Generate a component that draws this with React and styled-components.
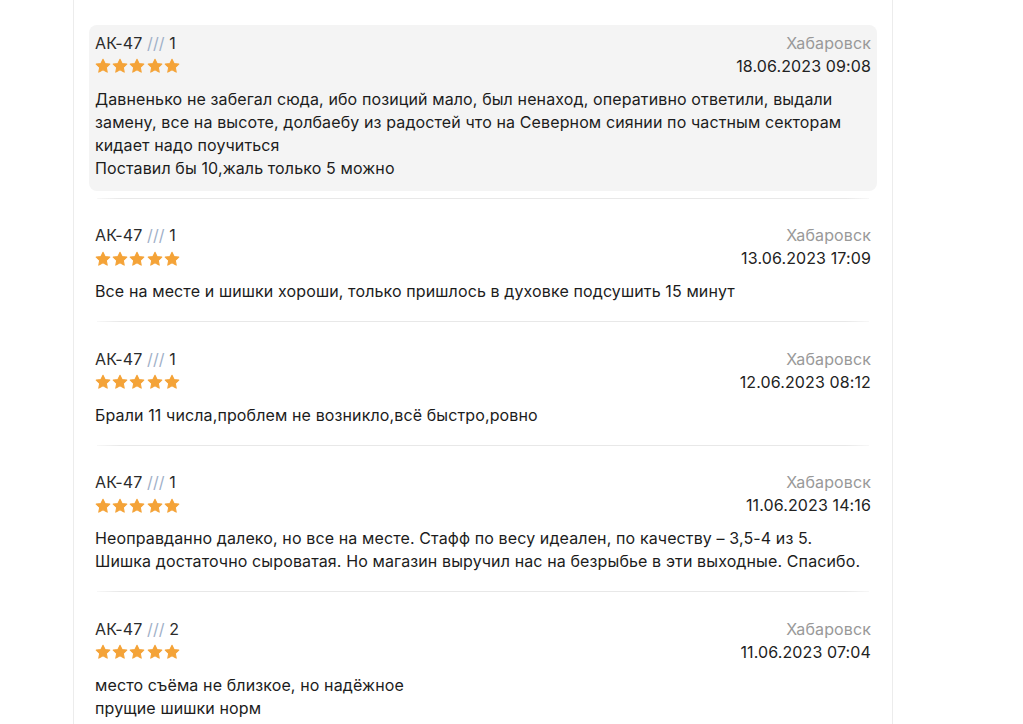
import React from 'react';
import styled, { createGlobalStyle } from 'styled-components';

const GlobalStyle = createGlobalStyle`
  html, body {
    margin: 0;
    padding: 0;
    background: #fff;
  }
  body {
    font-family: Inter, "Noto Sans", sans-serif;
    color: #1f1f1f;
  }
`;

const Page = styled.div`
  display: flex;
  padding-left: 73px;
  width: 1023px;
  box-sizing: border-box;
  min-height: 724px;
`;

const Column = styled.main`
  width: 820px;
  box-sizing: border-box;
  min-height: 724px;
  border-left: 1px solid #ececec;
  border-right: 1px solid #ececec;
  padding: 25px 15px 0 15px;
`;

const Review = styled.article`
  padding: 6.5px 6px 11px;
  border-radius: 8px;
  background: ${(p) => (p.highlighted ? '#f4f4f4' : 'transparent')};
`;

const Divider = styled.div`
  height: 1px;
  margin: 7px 8px 19px;
  background: linear-gradient(90deg, rgba(230,230,230,0.3), #e8e8e8 3%, #e8e8e8 97%, rgba(230,230,230,0.3));
`;

const Head = styled.header`
  display: flex;
  justify-content: space-between;
  font-size: 16px;
  line-height: 23px;
  letter-spacing: 0.12px;
`;

const Side = styled.div`
  display: flex;
  flex-direction: column;
  align-items: ${(p) => (p.right ? 'flex-end' : 'flex-start')};
`;

const Author = styled.div`
  color: #2b2b2b;
`;

const Slashes = styled.span`
  color: #9fb0c8;
`;

const Stars = styled.div`
  display: flex;
  gap: 1.2px;
  height: 23px;
  align-items: center;
`;

const Location = styled.div`
  color: #999;
`;

const DateText = styled.div`
  color: #222;
`;

const Body = styled.p`
  margin: 10px 0 0;
  font-size: 16px;
  line-height: 23px;
  letter-spacing: 0.12px;
  color: #1c1c1c;
  white-space: pre-line;
`;

const Star = () => (
  <svg width="16" height="16" viewBox="0 0 24 24">
    <path
      d="M12 1.8l3.1 6.5 7.1.9-5.2 4.9 1.3 7.1L12 17.8l-6.3 3.4 1.3-7.1L1.8 9.2l7.1-.9z"
      fill="#f4a338"
      stroke="#f4a338"
      strokeWidth="1.6"
      strokeLinejoin="round"
    />
  </svg>
);

const reviews = [
  {
    n: 1,
    date: '18.06.2023 09:08',
    text: 'Давненько не забегал сюда, ибо позиций мало, был ненаход, оперативно ответили, выдали замену, все на высоте, долбаебу из радостей что на Северном сиянии по частным секторам кидает надо поучиться\nПоставил бы 10,жаль только 5 можно',
    highlighted: true,
  },
  {
    n: 1,
    date: '13.06.2023 17:09',
    text: 'Все на месте и шишки хороши, только пришлось в духовке подсушить 15 минут',
  },
  {
    n: 1,
    date: '12.06.2023 08:12',
    text: 'Брали 11 числа,проблем не возникло,всё быстро,ровно',
  },
  {
    n: 1,
    date: '11.06.2023 14:16',
    text: 'Неоправданно далеко, но все на месте. Стафф по весу идеален, по качеству – 3,5-4 из 5. Шишка достаточно сыроватая. Но магазин выручил нас на безрыбье в эти выходные. Спасибо.',
  },
  {
    n: 2,
    date: '11.06.2023 07:04',
    text: 'место съёма не близкое, но надёжное\nпрущие шишки норм',
  },
];

export default function App() {
  return (
    <>
      <GlobalStyle />
      <Page>
        <Column>
          {reviews.map((r, i) => (
            <React.Fragment key={i}>
              {i > 0 && <Divider />}
              <Review highlighted={r.highlighted}>
                <Head>
                  <Side>
                    <Author>
                      АК-47 <Slashes>///</Slashes> {r.n}
                    </Author>
                    <Stars>
                      {[0, 1, 2, 3, 4].map((s) => (
                        <Star key={s} />
                      ))}
                    </Stars>
                  </Side>
                  <Side right>
                    <Location>Хабаровск</Location>
                    <DateText>{r.date}</DateText>
                  </Side>
                </Head>
                <Body>{r.text}</Body>
              </Review>
            </React.Fragment>
          ))}
        </Column>
      </Page>
    </>
  );
}
